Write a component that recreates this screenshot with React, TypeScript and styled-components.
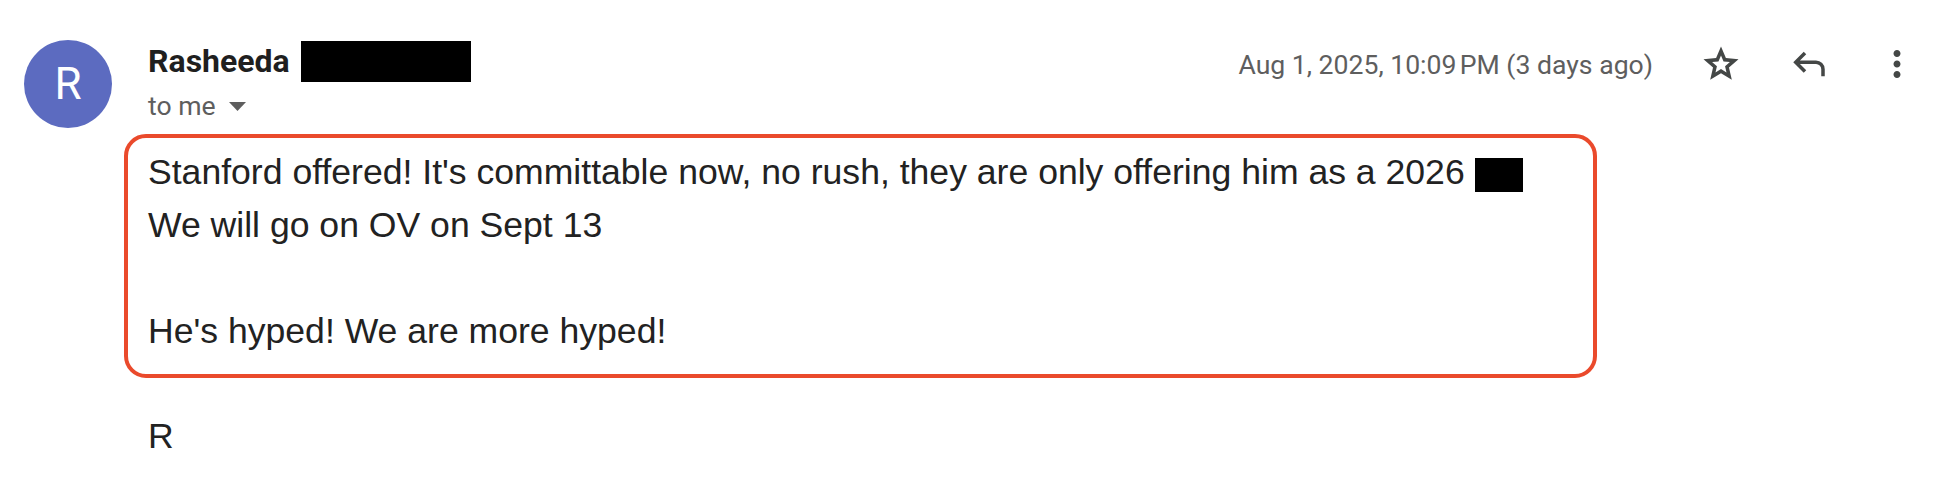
import React from "react";
import styled, { createGlobalStyle } from "styled-components";

const Global = createGlobalStyle`
  html, body { margin: 0; padding: 0; background: #ffffff; }
  body { font-family: Roboto, "Liberation Sans", Arial, sans-serif; }
`;

const Page = styled.div`
  padding: 20px 3px 0 24px;
  box-sizing: border-box;
  width: 1944px;
`;

const Message = styled.div`
  display: flex;
  align-items: flex-start;
  gap: 12px;
`;

const Avatar = styled.div`
  flex: none;
  width: 88px;
  height: 88px;
  margin-top: 20px;
  border-radius: 50%;
  background: #5c6bc0;
  color: #ffffff;
  display: flex;
  align-items: center;
  justify-content: center;
  font-family: Roboto, sans-serif;
  font-size: 44px;
  font-weight: 400;
`;

const Main = styled.div`
  flex: 1;
  min-width: 0;
  display: flex;
  flex-direction: column;
`;

const Header = styled.div`
  display: flex;
  justify-content: space-between;
  align-items: flex-start;
`;

const Sender = styled.div`
  padding: 21px 0 0 24px;
  display: flex;
  flex-direction: column;
`;

const NameRow = styled.div`
  display: flex;
  align-items: center;
  gap: 11px;
  height: 41px;
`;

const Name = styled.span`
  font-family: Roboto, sans-serif;
  font-weight: 700;
  font-size: 32px;
  line-height: 41px;
  color: #1f1f1f;
`;

const Redacted = styled.span<{ $w: number; $h: number }>`
  display: inline-block;
  width: ${(p) => p.$w}px;
  height: ${(p) => p.$h}px;
  background: #000000;
  vertical-align: middle;
`;

const ToRow = styled.div`
  margin-top: 6px;
  display: flex;
  align-items: center;
  gap: 13px;
  font-family: Roboto, sans-serif;
  font-size: 26.6px;
  line-height: 36px;
  color: #5e5e5e;
`;

const Actions = styled.div`
  display: flex;
  align-items: center;
`;

const DateText = styled.span`
  font-family: Roboto, sans-serif;
  font-size: 26.6px;
  color: #5e5e5e;
  margin-right: 24px;
  white-space: nowrap;
`;

const IconButton = styled.button`
  width: 88px;
  height: 88px;
  border: none;
  background: transparent;
  padding: 0;
  display: flex;
  align-items: center;
  justify-content: center;
  color: #444746;
`;

const BodyBox = styled.div`
  margin-top: 10px;
  width: 1473px;
  box-sizing: border-box;
  border: 4px solid #ea4a2c;
  border-radius: 22px;
  padding: 8px 20px 16px 20px;
  font-family: "Liberation Sans", Arial, Helvetica, sans-serif;
  font-size: 35.6px;
  line-height: 53px;
  color: #222222;
`;

const Line = styled.div`
  min-height: 53px;
  white-space: nowrap;
`;

const Signature = styled.div`
  margin-top: 32px;
  padding-left: 24px;
  font-family: "Liberation Sans", Arial, Helvetica, sans-serif;
  font-size: 35.6px;
  line-height: 53px;
  color: #222222;
`;

const StarIcon = () => (
  <svg width="42" height="42" viewBox="0 -960 960 960" fill="currentColor">
    <path d="m354-287 126-76 126 77-33-144 111-96-146-13-58-136-58 135-146 13 111 97-33 143ZM233-120l65-281L80-590l288-25 112-265 112 265 288 25-218 189 65 281-247-149-247 149Z" />
  </svg>
);

const ReplyIcon = () => (
  <svg width="42" height="42" viewBox="0 -960 960 960" fill="currentColor">
    <path d="M760-200v-160q0-50-35-85t-85-35H273l144 144-57 56-240-240 240-240 57 56-144 144h367q83 0 141.5 58.5T840-360v160h-80Z" />
  </svg>
);

const MoreIcon = () => (
  <svg width="42" height="42" viewBox="0 -960 960 960" fill="currentColor">
    <path d="M480-160q-33 0-56.5-23.5T400-240q0-33 23.5-56.5T480-320q33 0 56.5 23.5T560-240q0 33-23.5 56.5T480-160Zm0-240q-33 0-56.5-23.5T400-480q0-33 23.5-56.5T480-560q33 0 56.5 23.5T560-480q0 33-23.5 56.5T480-400Zm0-240q-33 0-56.5-23.5T400-720q0-33 23.5-56.5T480-800q33 0 56.5 23.5T560-720q0 33-23.5 56.5T480-640Z" />
  </svg>
);

const Caret = () => (
  <svg width="17" height="9" viewBox="0 0 17 9" fill="#5e5e5e">
    <path d="M0 0h17L8.5 9z" />
  </svg>
);

export default function App() {
  return (
    <>
      <Global />
      <Page>
        <Message>
          <Avatar>R</Avatar>
          <Main>
            <Header>
              <Sender>
                <NameRow>
                  <Name>Rasheeda</Name>
                  <Redacted $w={170} $h={41} />
                </NameRow>
                <ToRow>
                  <span>to me</span>
                  <Caret />
                </ToRow>
              </Sender>
              <Actions>
                <DateText>Aug 1, 2025, 10:09{"\u202f"}PM (3 days ago)</DateText>
                <IconButton aria-label="Star">
                  <StarIcon />
                </IconButton>
                <IconButton aria-label="Reply">
                  <ReplyIcon />
                </IconButton>
                <IconButton aria-label="More">
                  <MoreIcon />
                </IconButton>
              </Actions>
            </Header>
            <BodyBox>
              <Line>
                Stanford offered! It's committable now, no rush, they are only offering him as a 2026{" "}
                <Redacted $w={48} $h={34} />
              </Line>
              <Line>We will go on OV on Sept 13</Line>
              <Line />
              <Line>He's hyped! We are more hyped!</Line>
            </BodyBox>
            <Signature>R</Signature>
          </Main>
        </Message>
      </Page>
    </>
  );
}
